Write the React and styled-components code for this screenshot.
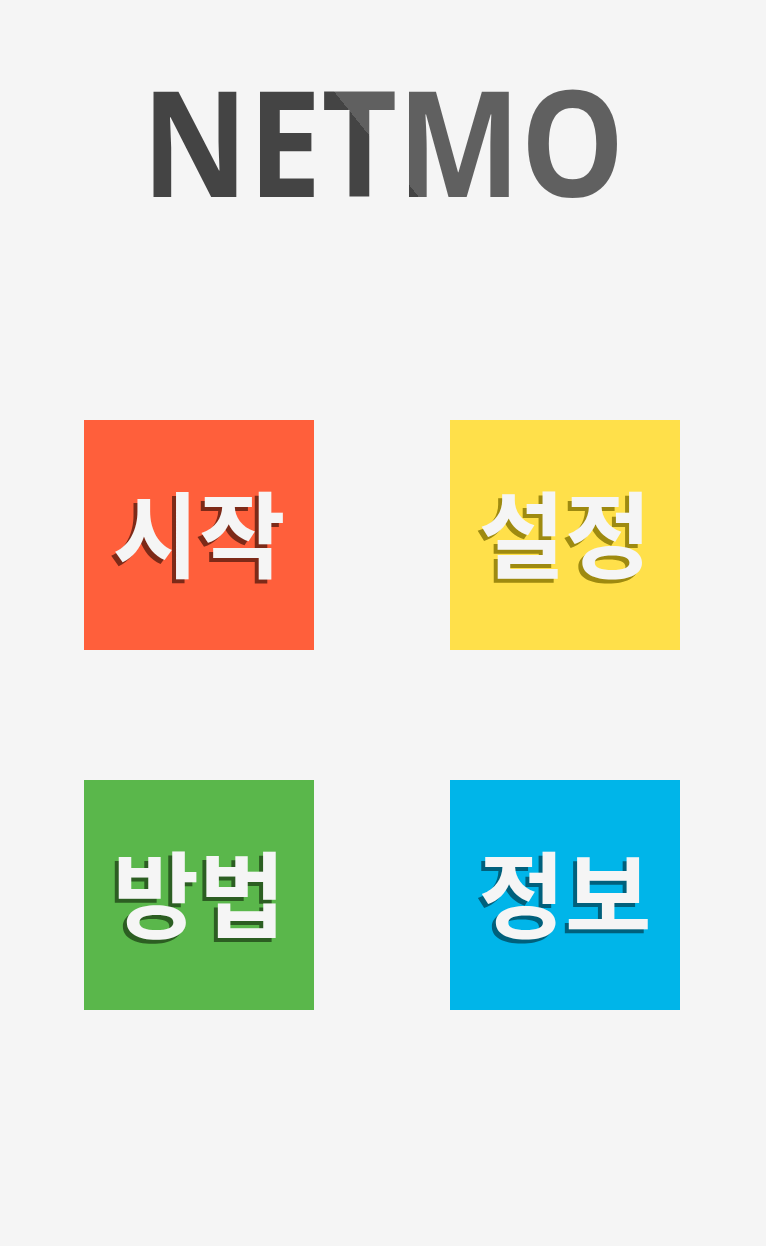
import React from "react";
import styled, { createGlobalStyle } from "styled-components";

const Global = createGlobalStyle`
  html, body { margin: 0; padding: 0; background: #f5f5f5; }
  body { font-family: "Open Sans", "Noto Sans CJK KR", sans-serif; }
`;

const Page = styled.div`
  width: 766px;
  height: 1246px;
  background: #f5f5f5;
  display: flex;
  flex-direction: column;
  align-items: center;
`;

const Title = styled.h1`
  margin: 50px 0 0;
  font-family: "Open Sans", sans-serif;
  font-weight: 700;
  font-size: 147px;
  line-height: 180px;
  letter-spacing: 0;
  transform: scaleX(0.89);
  background: linear-gradient(47.9deg, #444444 253px, #606060 253px);
  -webkit-background-clip: text;
  background-clip: text;
  color: transparent;
`;

const Grid = styled.div`
  align-self: flex-start;
  margin: 190px 0 0 84px;
  display: grid;
  grid-template-columns: 230px 230px;
  column-gap: 136px;
  row-gap: 130px;
`;

const Tile = styled.button`
  width: 230px;
  height: 230px;
  border: 0;
  padding: 0 0 10px;
  background: ${(p) => p.$bg};
  display: flex;
  align-items: center;
  justify-content: center;
  font-family: "Noto Sans CJK KR", sans-serif;
  font-weight: 700;
  font-size: 94px;
  line-height: 1;
  color: #f5f5f5;
  text-shadow: -4px 4px 0 ${(p) => p.$shadow};
  cursor: pointer;
`;

const tiles = [
  { label: "시작", bg: "#ff5f3b", shadow: "#7d2a18" },
  { label: "설정", bg: "#ffe04a", shadow: "#9e8a10" },
  { label: "방법", bg: "#5ab74b", shadow: "#2c5e22" },
  { label: "정보", bg: "#00b5e9", shadow: "#00607c" },
];

export default function App() {
  return (
    <Page>
      <Global />
      <Title>NETMO</Title>
      <Grid>
        {tiles.map((t) => (
          <Tile key={t.label} $bg={t.bg} $shadow={t.shadow}>
            {t.label}
          </Tile>
        ))}
      </Grid>
    </Page>
  );
}
